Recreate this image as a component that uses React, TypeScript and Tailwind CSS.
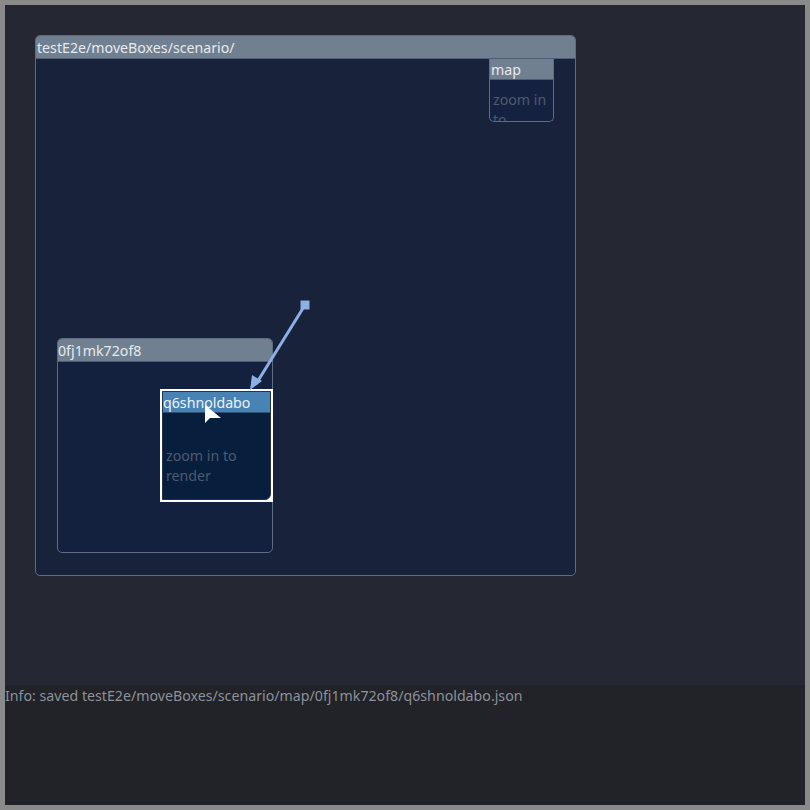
import React from "react";

const font = { fontFamily: '"Noto Sans", "Open Sans", sans-serif' };

export default function App() {
  return (
    <div className="w-[810px] h-[810px] bg-[#8a8a8a] p-[5px] text-[14.2px]" style={font}>
      <div className="w-full h-full flex flex-col">
        <div className="relative h-[680px] bg-[#252832] overflow-hidden">
          {/* outer box */}
          <div className="absolute left-[30px] top-[30px] w-[541px] h-[541px] rounded-[5px] border border-[#5d6b85] bg-[#18223a] overflow-hidden">
            <div className="h-[23px] bg-[#718090] border-b border-[#4f5d74] leading-[23px] text-[#e6e9ee] pl-[1px]">
              testE2e/moveBoxes/scenario/
            </div>
            {/* map box */}
            <div className="absolute left-[453px] top-[23px] w-[65px] h-[63px] rounded-b-[5px] border border-t-0 border-[#5d6b85] bg-[#152140] overflow-hidden">
              <div className="h-[21px] bg-[#718090] border-b border-[#4f5d74] leading-[21px] text-[#e6e9ee] pl-[1px]">
                map
              </div>
              <div className="px-[3px] pt-[10px] leading-[20px] text-[#4e5a6e]">
                zoom in to render
              </div>
            </div>
            {/* 0fj box */}
            <div className="absolute left-[21px] top-[302px] w-[216px] h-[215px] rounded-[5px] border border-[#5d6b85] bg-[#13213f] overflow-hidden">
              <div className="h-[23px] bg-[#718090] border-b border-[#4f5d74] leading-[23px] text-[#e6e9ee]">
                0fj1mk72of8
              </div>
            </div>
          </div>
          {/* selected box */}
          <div className="absolute left-[155px] top-[384px] w-[113px] h-[113px] border-2 border-white bg-white">
            <div className="relative w-full h-full border border-[#23344f] rounded-br-[6px] bg-[#071f3d] overflow-hidden">
              <div className="h-[21px] bg-[#4883b6] border-b border-[#2c4f70] leading-[21px] text-[#eef2f6]">
                q6shnoldabo
              </div>
              <div className="px-[3px] pt-[33px] leading-[20px] text-[#4e5a6e]">
                zoom in to
                <br />
                render
              </div>
            </div>
          </div>
          {/* arrow + cursor */}
          <svg className="absolute left-0 top-0" width="800" height="680" viewBox="0 0 800 680">
            <rect x="295.5" y="295.5" width="9" height="9" fill="#8eaee6" />
            <line x1="300" y1="300" x2="251" y2="379" stroke="#8eaee6" strokeWidth="3" />
            <polygon points="245,385 247,370 257,376" fill="#8eaee6" />
            <polygon points="200,400 200,418 205,413 216,413" fill="#ffffff" />
          </svg>
        </div>
        <div className="flex-1 bg-[#212328] leading-[21px] text-[#8c919a]">
          Info: saved testE2e/moveBoxes/scenario/map/0fj1mk72of8/q6shnoldabo.json
        </div>
      </div>
    </div>
  );
}
